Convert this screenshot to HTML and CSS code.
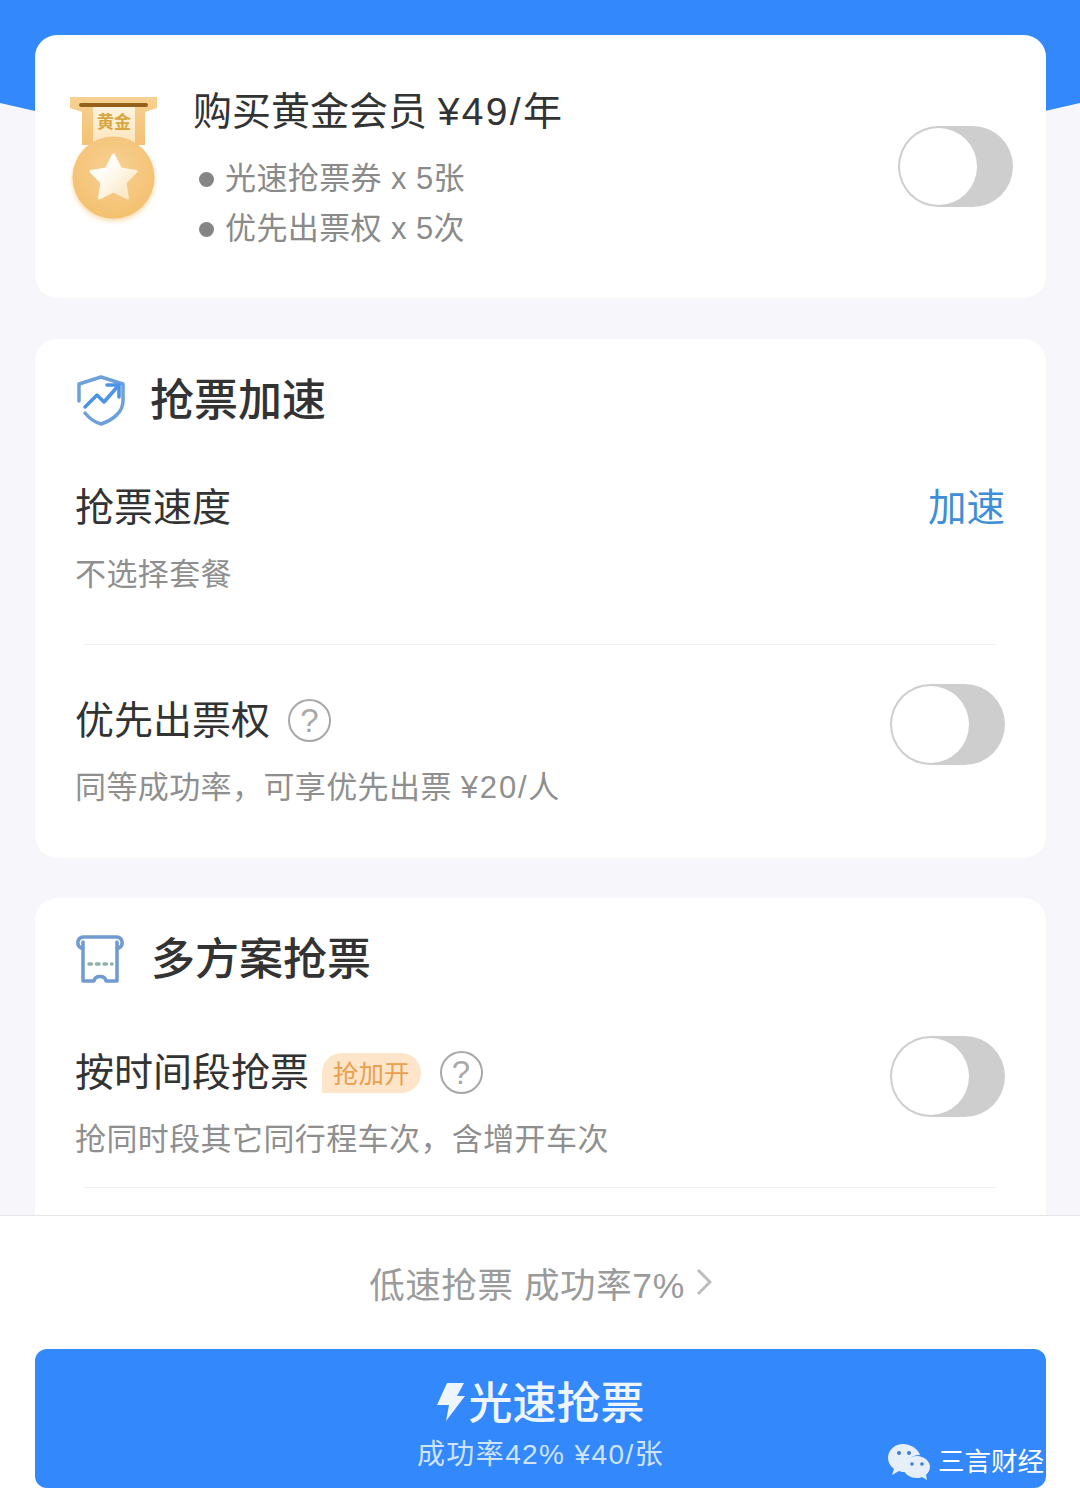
FILE: index.html
```html
<!DOCTYPE html>
<html lang="zh-CN">
<head>
    <meta charset="UTF-8">
    <title>光速抢票</title>
    <link rel="stylesheet" href="styles.css">
</head>
<body>
<div class="page">
    <div class="scroller">
        <div class="hero"></div>

        <div class="card member">
            <svg class="medal" width="87" height="130" viewBox="0 0 87 130">
                <defs>
                    <linearGradient id="ribbon" x1="0" y1="0" x2="0" y2="1">
                        <stop offset="0" stop-color="#f6d192"/>
                        <stop offset="1" stop-color="#f4c174"/>
                    </linearGradient>
                    <linearGradient id="panel" x1="0" y1="0" x2="0" y2="1">
                        <stop offset="0" stop-color="#fdf3dc"/>
                        <stop offset="1" stop-color="#fbe6bf"/>
                    </linearGradient>
                    <linearGradient id="star" x1="0" y1="0" x2="1" y2="1">
                        <stop offset="0.35" stop-color="#fffdf8"/>
                        <stop offset="1" stop-color="#fae2b6"/>
                    </linearGradient>
                    <radialGradient id="coin" cx="0.5" cy="0.4" r="0.65">
                        <stop offset="0" stop-color="#f7d195"/>
                        <stop offset="1" stop-color="#f4bf6c"/>
                    </radialGradient>
                    <filter id="glow" x="-20%" y="-20%" width="140%" height="140%">
                        <feGaussianBlur stdDeviation="2.5"/>
                    </filter>
                </defs>
                <path d="M0 0H87V11L75 15V48H12V15L0 11Z" fill="url(#ribbon)"/>
                <path d="M23 9H65V48H23Z" fill="url(#panel)"/>
                <rect x="9" y="6" width="69" height="4" rx="2" fill="#95601a"/>
                <text class="medal-text" x="44" y="31" text-anchor="middle">黄金</text>
                <circle cx="43.5" cy="83" r="41" fill="#f6d9a8" filter="url(#glow)"/>
                <circle cx="43.5" cy="80.5" r="41" fill="url(#coin)"/>
                <path d="M43.5 58 50.5 72 66 74.5 55 85.5 57.5 101 43.5 94 29.5 101 32 85.5 21 74.5 36.500 72Z" fill="url(#star)" stroke="url(#star)" stroke-width="3" stroke-linejoin="round"/>
            </svg>
            <div class="member-body">
                <div class="member-title">购买黄金会员 <span class="price">¥49/</span>年</div>
                <div class="bullet">光速抢票券 x 5张</div>
                <div class="bullet">优先出票权 x 5次</div>
            </div>
            <div class="switch"></div>
        </div>

        <div class="card">
            <div class="card-head">
                <svg class="head-icon" width="50" height="52" viewBox="0 0 50 52" fill="none" stroke="#6ea1dc" stroke-width="3.5" stroke-linecap="round" stroke-linejoin="round">
                    <path d="M3 27V10L25 3 47 10V27C47 38 37 46 25 50 18 48 13 44 9 39"/>
                    <path d="M9 33 21 21 28 28 42 12" stroke="#4a93e8"/>
                    <path d="M31 11H43V23" stroke="#4a93e8"/>
                </svg>
                <span class="head-title">抢票加速</span>
            </div>
            <div class="row row-first">
                <div class="row-main">
                    <div class="row-title">抢票速度</div>
                    <div class="row-sub">不选择套餐</div>
                </div>
                <span class="row-link">加速</span>
            </div>
            <div class="divider"></div>
            <div class="row row-switch">
                <div class="row-main">
                    <div class="row-title">优先出票权<span class="help">?</span></div>
                    <div class="row-sub">同等成功率，可享优先出票 <span class="price">¥20/</span>人</div>
                </div>
                <div class="switch"></div>
            </div>
        </div>

        <div class="card card-last">
            <div class="card-head">
                <svg class="head-icon" width="48" height="50" viewBox="0 0 48 50" fill="none" stroke="#6f9bd0" stroke-width="3.5" stroke-linecap="round" stroke-linejoin="round">
                    <path d="M7 14H5C0 11 1 3 8 3H40C47 3 48 11 43 14H41"/>
                    <path d="M7 8V47H18C19 41 29 41 30 47H41V8"/>
                    <path d="M13 30H36" stroke="#8fb0a8" stroke-dasharray="2.5 5"/>
                </svg>
                <span class="head-title">多方案抢票</span>
            </div>
            <div class="row row-time">
                <div class="row-main">
                    <div class="row-title">按时间段抢票<span class="badge">抢加开</span><span class="help">?</span></div>
                    <div class="row-sub">抢同时段其它同行程车次，含增开车次</div>
                </div>
                <div class="switch"></div>
            </div>
            <div class="divider divider-tight"></div>
        </div>
    </div>

    <div class="footer">
        <div class="slow-link">低速抢票 成功率7%<svg class="chevron" width="16" height="28" viewBox="0 0 16 28" fill="none" stroke="#bdbdbd" stroke-width="3"><path d="M2 2 14 14 2 26"/></svg></div>
        <div class="buy-btn">
            <div class="buy-title">
                <svg class="bolt" width="28" height="38" viewBox="0 0 28 38"><path d="M10 0H27L20 13H28L9 38 12 22H0Z" fill="#eef5ff"/></svg>
                光速抢票
            </div>
            <div class="buy-sub">成功率42% ¥40/张</div>
            <div class="watermark">
                <svg width="42" height="36" viewBox="0 0 42 36">
                    <path d="M15 0C7 0 0 6 0 14 0 18 2 22 6 25L4 31 11 27C13 28 15 28 17 28 15 19 21 11 32 11 30 5 23 0 15 0Z" fill="#e6eff8"/>
                    <path d="M29 12C21 12 15 17 15 23 15 29 21 34 29 34 31 34 32 34 34 33L39 36 38 31C40 29 42 26 42 23 42 17 36 12 29 12Z" fill="#e6eff8"/>
                    <circle cx="11" cy="9" r="2" fill="#3a7fd0"/>
                    <circle cx="21" cy="9" r="2" fill="#3a7fd0"/>
                    <circle cx="24" cy="20" r="1.8" fill="#3a7fd0"/>
                    <circle cx="34" cy="20" r="1.8" fill="#3a7fd0"/>
                </svg>
                <span>三言财经</span>
            </div>
        </div>
    </div>
</div>
</body>
</html>
```

FILE: styles.css
```css
* {
    box-sizing: border-box;
}

html, body {
    margin: 0;
    padding: 0;
}

body {
    font-family: "Liberation Sans", "Noto Sans CJK SC", sans-serif;
    color: #333;
    background: #f7f6fa;
}

.page {
    display: flex;
    flex-direction: column;
    width: 1080px;
    height: 1510px;
    overflow: hidden;
}

.scroller {
    position: relative;
    flex: 1;
    overflow: hidden;
    padding: 35px 34px 0 35px;
}

/* blue band behind first card, only the two corners show */
.hero {
    position: absolute;
    top: 0;
    left: 0;
    width: 1080px;
    height: 160px;
    background: #3388fb;
    clip-path: polygon(0 0, 100% 0, 100% 103px, 1045px 111px, 50% 150px, 35px 111px, 0 103px);
}

.card {
    position: relative;
    background: #fff;
    border-radius: 22px;
    margin-bottom: 41px;
    padding: 31px 41px 48px 40px;
}

.card-last {
    margin-top: -1px;
    padding-bottom: 90px;
}

.member {
    display: flex;
    height: 263px;
    padding: 52px 33px 0 35px;
}

.medal {
    flex: none;
    margin-top: 10px;
}

.medal-text {
    font-size: 17px;
    font-weight: 700;
    fill: #d9a540;
}

.member-body {
    flex: 1;
    margin-left: 36px;
}

.member-title {
    font-size: 39px;
    line-height: 50px;
}

.price {
    letter-spacing: 1.8px;
}

.member-title .price {
    letter-spacing: 2.3px;
}

.bullet {
    display: flex;
    align-items: center;
    font-size: 31px;
    line-height: 50px;
    letter-spacing: 0.4px;
    color: #8a8a8a;
    margin-left: 6px;
}

.member-title + .bullet {
    margin-top: 17px;
}

.bullet::before {
    content: "";
    width: 15px;
    height: 15px;
    border-radius: 50%;
    background: #858585;
    margin-right: 11px;
}

.switch {
    flex: none;
    position: relative;
    width: 115px;
    height: 81px;
    border-radius: 41px;
    background: #cfcecf;
}

.switch::after {
    content: "";
    position: absolute;
    left: 2px;
    top: 2px;
    width: 77px;
    height: 77px;
    border-radius: 50%;
    background: #fff;
}

.member .switch {
    margin-top: 39px;
}

.card-head {
    display: flex;
    align-items: center;
    height: 60px;
}

.head-icon {
    flex: none;
    margin-left: 1px;
}

.head-title {
    font-size: 44px;
    font-weight: 500;
    margin: -6px 0 0 24px;
}

.card-last .head-title {
    margin-left: 27px;
}

.row {
    display: flex;
    align-items: center;
    justify-content: space-between;
}

.row-first {
    margin-top: 53px;
}

.row-switch {
    margin-top: 51px;
}

.row-time {
    margin-top: 59px;
}

.row-title {
    display: flex;
    align-items: center;
    font-size: 39px;
    line-height: 50px;
}

.row-sub {
    font-size: 31px;
    line-height: 44px;
    letter-spacing: 0.4px;
    margin-top: 20px;
    color: #8f8f8f;
}

.row-link {
    font-size: 38.5px;
    color: #3f8fd8;
    margin-top: -72px;
}

.row-switch .switch,
.row-time .switch {
    margin-top: -58px;
}

.divider {
    height: 1px;
    background: #f1f1f3;
    margin: 47px 9px 0;
}

.divider-tight {
    margin-top: 25px;
}

.help {
    display: inline-flex;
    align-items: center;
    justify-content: center;
    width: 43px;
    height: 43px;
    margin-left: 18px;
    margin-top: -2px;
    border: 2.5px solid #a8a8a8;
    border-radius: 50%;
    font-size: 33px;
    line-height: 1;
    color: #a8a8a8;
}

.badge {
    display: inline-block;
    height: 40px;
    margin-left: 13px;
    padding: 0 11px;
    background: #fde5c9;
    border-radius: 20px 20px 20px 0;
    font-size: 25.5px;
    line-height: 42px;
    color: #e9a04f;
}

.badge + .help {
    margin-left: 19px;
}

.footer {
    flex: none;
    height: 295px;
    background: #fff;
    border-top: 1px solid #e6e6e6;
    padding: 0 34px 22px 35px;
}

.slow-link {
    display: flex;
    align-items: center;
    justify-content: center;
    height: 50px;
    margin-top: 41px;
    font-size: 35.5px;
    letter-spacing: 0.6px;
    color: #9b9b9b;
}

.chevron {
    margin-left: 11px;
}

.buy-btn {
    position: relative;
    height: 139px;
    margin-top: 42px;
    background: #3388fb;
    border-radius: 12px;
    color: #eef5ff;
    text-align: center;
    padding-top: 26px;
}

.buy-title {
    display: flex;
    align-items: center;
    justify-content: center;
    gap: 4px;
    height: 50px;
    font-size: 44px;
    font-weight: 500;
}

.bolt {
    margin-top: 4px;
}

.buy-sub {
    font-size: 28px;
    line-height: 40px;
    letter-spacing: 1.4px;
    margin-top: 10px;
    color: #cfe3fb;
}

/* wechat watermark stamped on top of the screenshot */
.watermark {
    position: absolute;
    right: 2px;
    top: 95px;
    display: flex;
    align-items: center;
    gap: 8px;
    font-size: 26.5px;
    line-height: 36px;
    letter-spacing: 0;
    color: #fff;
}
```
